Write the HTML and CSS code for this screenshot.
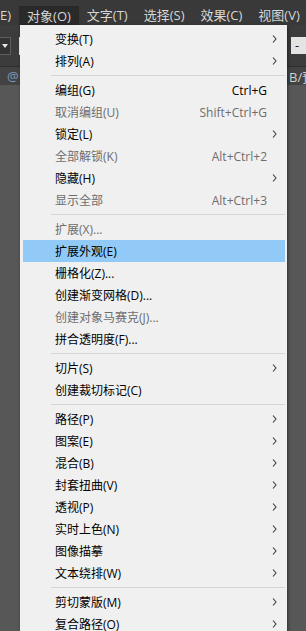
FILE: index.html
```html
<!DOCTYPE html>
<html lang="zh-CN">

<head>
    <meta charset="UTF-8">
    <meta name="viewport" content="width=device-width, initial-scale=1.0">
    <link rel="stylesheet" href="styles.css">
</head>

<body>
    <div class="menubar">
        <span class="top-item cut">E)</span>
        <span class="top-item active">对象(O)</span>
        <span class="top-item">文字(T)</span>
        <span class="top-item">选择(S)</span>
        <span class="top-item">效果(C)</span>
        <span class="top-item">视图(V)</span>
    </div>

    <!-- control bar behind the open menu -->
    <div class="toolbar">
        <div class="tool-left">
            <span class="dropdown"><svg width="6" height="4" viewBox="0 0 6 4"><path d="M0 0H6L3 4Z" fill="#e6e6e6"/></svg></span>
            <span class="field"></span>
        </div>
        <div class="tool-right">
            <span class="dark-box"></span>
            <span class="minus-box">-</span>
        </div>
    </div>
    <div class="tabrow">
        <span class="at">@</span>
        <span class="tab-title">B/预览</span>
    </div>

    <div class="menu">
        <div class="item"><span class="label">变换(T)</span><span class="key"></span><span class="sub"><svg width="5" height="8" viewBox="0 0 5 8"><path d="M1 0.5L4 4L1 7.5" /></svg></span></div>
        <div class="item"><span class="label">排列(A)</span><span class="key"></span><span class="sub"><svg width="5" height="8" viewBox="0 0 5 8"><path d="M1 0.5L4 4L1 7.5" /></svg></span></div>
        <div class="sep"></div>
        <div class="item"><span class="label">编组(G)</span><span class="key">Ctrl+G</span><span class="sub"></span></div>
        <div class="item off"><span class="label">取消编组(U)</span><span class="key">Shift+Ctrl+G</span><span class="sub"></span></div>
        <div class="item"><span class="label">锁定(L)</span><span class="key"></span><span class="sub"><svg width="5" height="8" viewBox="0 0 5 8"><path d="M1 0.5L4 4L1 7.5" /></svg></span></div>
        <div class="item off"><span class="label">全部解锁(K)</span><span class="key">Alt+Ctrl+2</span><span class="sub"></span></div>
        <div class="item"><span class="label">隐藏(H)</span><span class="key"></span><span class="sub"><svg width="5" height="8" viewBox="0 0 5 8"><path d="M1 0.5L4 4L1 7.5" /></svg></span></div>
        <div class="item off"><span class="label">显示全部</span><span class="key">Alt+Ctrl+3</span><span class="sub"></span></div>
        <div class="sep"></div>
        <div class="item off"><span class="label">扩展(X)...</span><span class="key"></span><span class="sub"></span></div>
        <div class="item hover"><span class="label">扩展外观(E)</span><span class="key"></span><span class="sub"></span></div>
        <div class="item"><span class="label">栅格化(Z)...</span><span class="key"></span><span class="sub"></span></div>
        <div class="item"><span class="label">创建渐变网格(D)...</span><span class="key"></span><span class="sub"></span></div>
        <div class="item off"><span class="label">创建对象马赛克(J)...</span><span class="key"></span><span class="sub"></span></div>
        <div class="item"><span class="label">拼合透明度(F)...</span><span class="key"></span><span class="sub"></span></div>
        <div class="sep"></div>
        <div class="item"><span class="label">切片(S)</span><span class="key"></span><span class="sub"><svg width="5" height="8" viewBox="0 0 5 8"><path d="M1 0.5L4 4L1 7.5" /></svg></span></div>
        <div class="item"><span class="label">创建裁切标记(C)</span><span class="key"></span><span class="sub"></span></div>
        <div class="sep"></div>
        <div class="item"><span class="label">路径(P)</span><span class="key"></span><span class="sub"><svg width="5" height="8" viewBox="0 0 5 8"><path d="M1 0.5L4 4L1 7.5" /></svg></span></div>
        <div class="item"><span class="label">图案(E)</span><span class="key"></span><span class="sub"><svg width="5" height="8" viewBox="0 0 5 8"><path d="M1 0.5L4 4L1 7.5" /></svg></span></div>
        <div class="item"><span class="label">混合(B)</span><span class="key"></span><span class="sub"><svg width="5" height="8" viewBox="0 0 5 8"><path d="M1 0.5L4 4L1 7.5" /></svg></span></div>
        <div class="item"><span class="label">封套扭曲(V)</span><span class="key"></span><span class="sub"><svg width="5" height="8" viewBox="0 0 5 8"><path d="M1 0.5L4 4L1 7.5" /></svg></span></div>
        <div class="item"><span class="label">透视(P)</span><span class="key"></span><span class="sub"><svg width="5" height="8" viewBox="0 0 5 8"><path d="M1 0.5L4 4L1 7.5" /></svg></span></div>
        <div class="item"><span class="label">实时上色(N)</span><span class="key"></span><span class="sub"><svg width="5" height="8" viewBox="0 0 5 8"><path d="M1 0.5L4 4L1 7.5" /></svg></span></div>
        <div class="item"><span class="label">图像描摹</span><span class="key"></span><span class="sub"><svg width="5" height="8" viewBox="0 0 5 8"><path d="M1 0.5L4 4L1 7.5" /></svg></span></div>
        <div class="item"><span class="label">文本绕排(W)</span><span class="key"></span><span class="sub"><svg width="5" height="8" viewBox="0 0 5 8"><path d="M1 0.5L4 4L1 7.5" /></svg></span></div>
        <div class="sep"></div>
        <div class="item"><span class="label">剪切蒙版(M)</span><span class="key"></span><span class="sub"><svg width="5" height="8" viewBox="0 0 5 8"><path d="M1 0.5L4 4L1 7.5" /></svg></span></div>
        <div class="item"><span class="label">复合路径(O)</span><span class="key"></span><span class="sub"><svg width="5" height="8" viewBox="0 0 5 8"><path d="M1 0.5L4 4L1 7.5" /></svg></span></div>
    </div>
</body>
</html>
```

FILE: styles.css
```css
body {
    margin: 0;
    width: 306px;
    height: 631px;
    overflow: hidden;
    position: relative;
    background: #575757;
    font-family: "Open Sans", "Noto Sans CJK SC", sans-serif;
}

/* application menu bar */
.menubar {
    display: flex;
    align-items: flex-end;
    height: 25px;
    background: #393939;
    color: #d6d6d6;
    font-size: 13px;
}
.top-item {
    height: 19px;
    line-height: 19px;
    padding: 0 8px;
    white-space: nowrap;
}
.top-item.cut {
    padding-left: 0;
}
.top-item.active {
    background: #2a2a2a;
    box-sizing: border-box;
    border: 1px solid #282828;
    border-bottom: none;
    padding: 0 7px;
    line-height: 18px;
}

/* control bar + document tabs, mostly covered by the menu */
.toolbar {
    display: flex;
    justify-content: space-between;
    align-items: center;
    height: 41px;
    background: #3c3c3c;
    border-bottom: 1px solid #2e2e2e;
}
.tool-left,
.tool-right {
    display: flex;
    align-items: center;
    gap: 8px;
}
.tool-right {
    gap: 4px;
}
.dropdown {
    display: flex;
    align-items: center;
    justify-content: center;
    width: 10px;
    height: 16px;
    background: #333;
    border: 1px solid #5e5e5e;
    border-left: none;
}
.field {
    width: 4px;
    height: 18px;
    background: #f4f4f4;
}
.dark-box {
    width: 6px;
    height: 17px;
    border: 1px solid #2c2c2c;
    background: #333;
}
.minus-box {
    width: 11px;
    height: 17px;
    background: #e4e4e4;
    color: #222;
    font-size: 13px;
    line-height: 16px;
    padding-left: 4px;
}
.tabrow {
    display: flex;
    justify-content: space-between;
    align-items: center;
    height: 18px;
    background: #434343;
    font-size: 13px;
}
.at {
    color: #7f9fc0;
    padding-left: 7px;
}
.tab-title {
    width: 17px;
    color: #d0d0d0;
    white-space: nowrap;
}

/* the open dropdown */
.menu {
    position: absolute;
    left: 20px;
    top: 25px;
    width: 267px;
    box-sizing: border-box;
    padding: 3px 2px 3px 3px;
    background: #f0f0f0;
    box-shadow: 1px 1px 3px rgba(0, 0, 0, 0.45);
    font-size: 12px;
    color: #000;
}
.item {
    display: flex;
    align-items: center;
    height: 22px;
    padding-left: 32px;
    white-space: nowrap;
}
.item.off {
    color: #6d6d6d;
}
.item.hover {
    background: #91c9f7;
}
.label {
    flex: 1;
}
.key {
    text-align: right;
}
.sub {
    width: 18px;
    display: flex;
    align-items: center;
}
.sub svg {
    margin-left: 5px;
    fill: none;
    stroke: #3c3c3c;
    stroke-width: 1.1;
}
.sep {
    height: 1px;
    margin: 3px 0 3px 28px;
    background: #d6d6d6;
}
```
